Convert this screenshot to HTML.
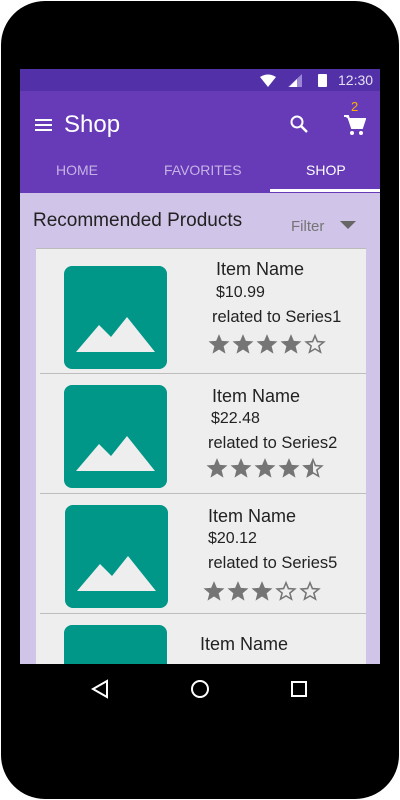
<!DOCTYPE html>
<html><head><style>
*{margin:0;padding:0;box-sizing:border-box}
body{width:400px;height:800px;background:#fff;position:relative;overflow:hidden;font-family:"Liberation Sans",sans-serif}
.phone{position:absolute;left:1px;top:1px;width:398px;height:798px;background:#000;border-radius:44px}
.screen{position:absolute;left:20px;top:69px;width:360px;height:595px;background:#d1c4e9;overflow:hidden}
.status{position:absolute;left:0;top:0;width:360px;height:22px;background:#5130a8}
.tool{position:absolute;left:0;top:22px;width:360px;height:102px;background:#673ab7}
.abs{position:absolute}
.tab{position:absolute;top:92px;font-size:14px;color:#c5b3e6}
.card{position:absolute;left:16px;top:179px;width:330px;height:420px;background:#eeeeee;border-top:1px solid #bbb}
.row{position:absolute;left:0;width:330px;height:120px}
.sep{position:absolute;left:4px;right:0;height:1px;background:#bdbdbd}
.img{position:absolute;width:103px;height:103px;background:#009688;border-radius:8px}
.t{position:absolute;color:#222;white-space:nowrap}
.stars{position:absolute}
</style></head><body>
<svg width="0" height="0" style="position:absolute">
<symbol id="sf" viewBox="0 0 20 20"><path d="M10 1 L12.6 7.2 L19.5 7.6 L14.2 12 L15.9 18.7 L10 15 L4.1 18.7 L5.8 12 L0.5 7.6 L7.4 7.2Z" fill="#757575"/></symbol>
<symbol id="so" viewBox="0 0 20 20"><path d="M10 2.5 L12.2 7.8 L18 8.2 L13.5 11.9 L15 17.4 L10 14.4 L5 17.4 L6.5 11.9 L2 8.2 L7.8 7.8Z" fill="none" stroke="#757575" stroke-width="1.4"/></symbol>
<symbol id="sh" viewBox="0 0 20 20"><path d="M10 2.5 L12.2 7.8 L18 8.2 L13.5 11.9 L15 17.4 L10 14.4 L5 17.4 L6.5 11.9 L2 8.2 L7.8 7.8Z" fill="none" stroke="#757575" stroke-width="1.4"/><path d="M10 1 L10 15 L4.1 18.7 L5.8 12 L0.5 7.6 L7.4 7.2Z" fill="#757575"/></symbol>
</svg>
<div class="phone"></div>
<div class="screen">
<div class="status">
<svg class="abs" style="left:240px;top:5px" width="16" height="13"><path d="M0 3 Q8 -2 16 3 L8 13Z" fill="#fff"/></svg>
<svg class="abs" style="left:268px;top:5px" width="14" height="13"><path d="M14 0 L14 13 L0 13Z" fill="#9c86d6"/><path d="M9 5 L9 13 L1 13Z" fill="#fff"/></svg>
<div class="abs" style="left:298px;top:5px;width:9px;height:13px;background:#fff;border-radius:1px"></div>
<div class="abs" style="left:318px;top:3px;font-size:14px;color:#e6e0f3">12:30</div>
</div>
<div class="tool">
<div class="abs" style="left:15px;top:28px;width:17px;height:2px;background:#fff;box-shadow:0 5px 0 #fff,0 10px 0 #fff"></div>
<div class="abs" style="left:44px;top:20px;font-size:24px;color:#fff">Shop</div>
<svg class="abs" style="left:269px;top:23px" width="20" height="20"><circle cx="8" cy="8" r="5.5" stroke="#fff" stroke-width="2" fill="none"/><path d="M12 12 L18 18" stroke="#fff" stroke-width="2.5"/></svg>
<div class="abs" style="left:331px;top:8px;font-size:13px;color:#ffb300">2</div>
<svg class="abs" style="left:324px;top:24px" width="22" height="22"><path d="M0 1 H4 L8 13 H18 L21 4 H5" fill="#fff" stroke="#fff" stroke-width="2"/><circle cx="8" cy="18" r="2" fill="#fff"/><circle cx="17" cy="18" r="2" fill="#fff"/></svg>
</div>
<div class="tab" style="left:36px;top:93px">HOME</div>
<div class="tab" style="left:144px;top:93px">FAVORITES</div>
<div class="tab" style="left:286px;top:93px;color:#fff">SHOP</div>
<div class="abs" style="left:250px;top:120px;width:110px;height:3px;background:#fff"></div>
<div class="abs" style="left:13px;top:141px;font-size:19px;color:#222">Recommended Products</div>
<div class="abs" style="left:271px;top:149px;font-size:15px;color:#757575">Filter</div>
<svg class="abs" style="left:320px;top:152px" width="16" height="9"><path d="M0 0 H16 L8 8Z" fill="#666"/></svg>
<div class="card">
 <div class="row" style="top:0">
  <div class="img" style="left:28px;top:17px"><svg width="103" height="103"><path d="M12 86 L35 59 L47 71 L63 51 L91 86Z" fill="#eee"/></svg></div>
  <div class="t" style="left:180px;top:10px;font-size:18px">Item Name</div>
  <div class="t" style="left:180px;top:35px;font-size:16px">$10.99</div>
  <div class="t" style="left:176px;top:59px;font-size:16.5px">related to Series1</div>
  <svg class="stars" style="left:172px;top:84px" width="125" height="22"><use href="#sf" x="0" width="22" height="22"/><use href="#sf" x="24" width="22" height="22"/><use href="#sf" x="48" width="22" height="22"/><use href="#sf" x="72" width="22" height="22"/><use href="#so" x="96" width="22" height="22"/></svg>
 </div>
 <div class="sep" style="top:124px"></div>
 <div class="row" style="top:124px">
  <div class="img" style="left:28px;top:12px"><svg width="103" height="103"><path d="M12 86 L35 59 L47 71 L63 51 L91 86Z" fill="#eee"/></svg></div>
  <div class="t" style="left:176px;top:13px;font-size:18px">Item Name</div>
  <div class="t" style="left:175px;top:37px;font-size:16px">$22.48</div>
  <div class="t" style="left:172px;top:61px;font-size:16.5px">related to Series2</div>
  <svg class="stars" style="left:170px;top:84px" width="125" height="22"><use href="#sf" x="0" width="22" height="22"/><use href="#sf" x="24" width="22" height="22"/><use href="#sf" x="48" width="22" height="22"/><use href="#sf" x="72" width="22" height="22"/><use href="#sh" x="96" width="22" height="22"/></svg>
 </div>
 <div class="sep" style="top:244px"></div>
 <div class="row" style="top:244px">
  <div class="img" style="left:29px;top:12px"><svg width="103" height="103"><path d="M12 86 L35 59 L47 71 L63 51 L91 86Z" fill="#eee"/></svg></div>
  <div class="t" style="left:172px;top:13px;font-size:18px">Item Name</div>
  <div class="t" style="left:172px;top:37px;font-size:16px">$20.12</div>
  <div class="t" style="left:172px;top:61px;font-size:16.5px">related to Series5</div>
  <svg class="stars" style="left:167px;top:87px" width="125" height="22"><use href="#sf" x="0" width="22" height="22"/><use href="#sf" x="24" width="22" height="22"/><use href="#sf" x="48" width="22" height="22"/><use href="#so" x="72" width="22" height="22"/><use href="#so" x="96" width="22" height="22"/></svg>
 </div>
 <div class="sep" style="top:364px"></div>
 <div class="row" style="top:364px">
  <div class="img" style="left:28px;top:12px"></div>
  <div class="t" style="left:164px;top:21px;font-size:18px">Item Name</div>
 </div>
</div>
</div>
<svg class="abs" style="left:90px;top:679px" width="20" height="20"><path d="M17 2 L3 10 L17 18Z" fill="none" stroke="#fff" stroke-width="2"/></svg>
<svg class="abs" style="left:190px;top:679px" width="20" height="20"><circle cx="10" cy="10" r="8" fill="none" stroke="#fff" stroke-width="2"/></svg>
<svg class="abs" style="left:291px;top:681px" width="18" height="18"><rect x="1" y="1" width="14" height="14" fill="none" stroke="#fff" stroke-width="2"/></svg>
</body></html>
